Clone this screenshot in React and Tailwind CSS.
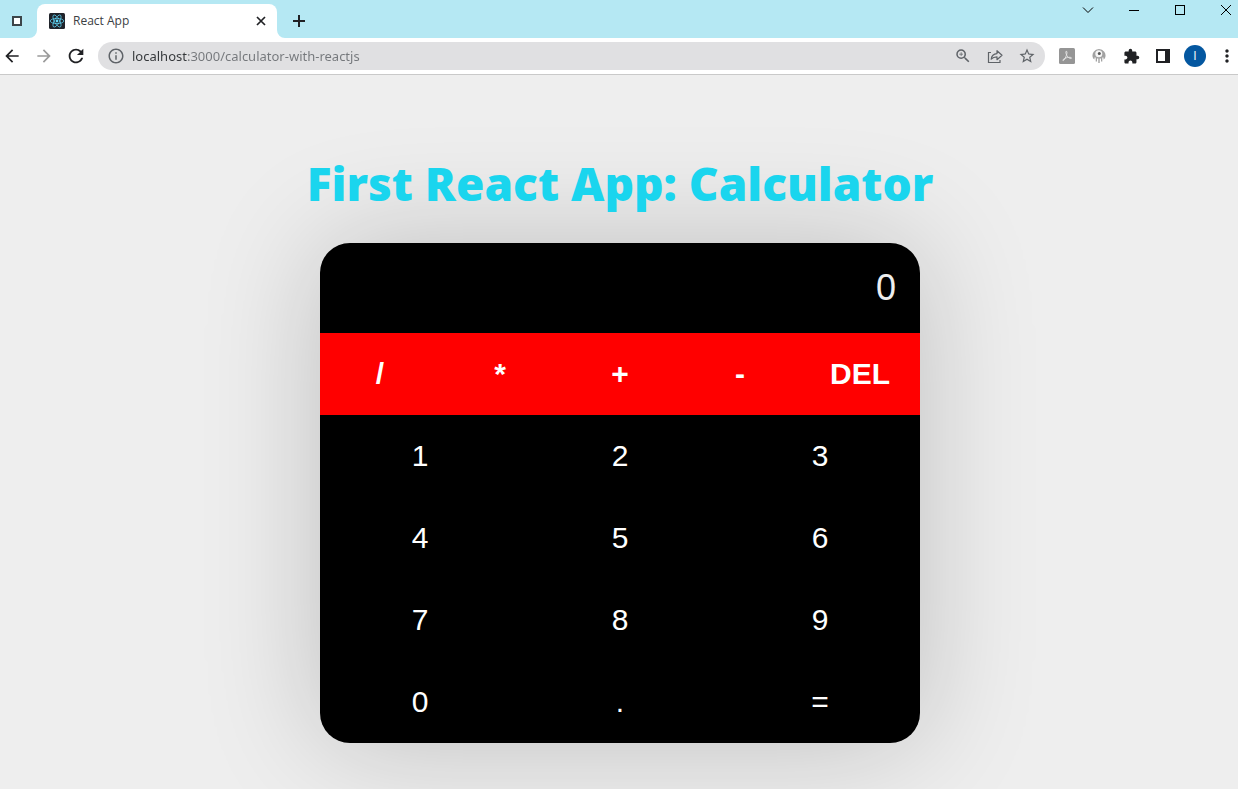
import React, { useState } from "react";
import {
  MdArrowBack,
  MdArrowForward,
  MdExtension,
  MdInfoOutline,
  MdMoreVert,
  MdRefresh,
  MdStarOutline,
  MdZoomIn,
} from "react-icons/md";

function ReactLogo() {
  return (
    <svg viewBox="0 0 16 16" className="size-4 shrink-0" aria-hidden="true">
      <rect width="16" height="16" rx="1.5" fill="#20232a" />
      <g fill="none" stroke="#61dafb" strokeWidth="0.7">
        <ellipse cx="8" cy="8" rx="6.8" ry="2.6" />
        <ellipse cx="8" cy="8" rx="6.8" ry="2.6" transform="rotate(60 8 8)" />
        <ellipse cx="8" cy="8" rx="6.8" ry="2.6" transform="rotate(120 8 8)" />
      </g>
      <circle cx="8" cy="8" r="1.4" fill="#61dafb" />
    </svg>
  );
}

function TabFlare({ className }) {
  return (
    <svg viewBox="0 0 8 8" className={className} aria-hidden="true">
      <path d="M8 0v8H0a8 8 0 0 0 8-8z" fill="#fff" />
    </svg>
  );
}

function IconButton({ label, children, className = "h-6 w-6" }) {
  return (
    <button
      type="button"
      aria-label={label}
      className={`flex shrink-0 items-center justify-center ${className}`}
    >
      {children}
    </button>
  );
}

function TabStrip() {
  return (
    <div className="flex h-[38px] items-end bg-[#b5e8f3] text-black">
      <div className="flex h-[34px] w-[29px] shrink-0 items-center justify-end">
        <IconButton label="Pinned tab">
          <svg viewBox="0 0 10 10" className="size-[10px]">
            <rect x="1" y="1" width="8" height="8" fill="#fff" stroke="#3c4549" strokeWidth="2" />
          </svg>
        </IconButton>
      </div>
      <TabFlare className="size-2 shrink-0" />
      <div className="flex h-[34px] w-60 shrink-0 items-center rounded-t-lg bg-white pr-1 pl-3">
        <ReactLogo />
        <span className="ml-2 flex-1 font-['Open_Sans',sans-serif] text-[12px] leading-4 text-[#3c4043]">
          React App
        </span>
        <IconButton label="Close tab">
          <svg viewBox="0 0 10 10" className="size-[10px]">
            <path d="M1 1l8 8M9 1L1 9" stroke="#202124" strokeWidth="1.7" />
          </svg>
        </IconButton>
      </div>
      <TabFlare className="size-2 shrink-0 -scale-x-100" />
      <div className="ml-[2px] flex h-[34px] items-center">
        <IconButton label="New tab">
          <svg viewBox="0 0 12 12" className="size-3">
            <path d="M6 0v12M0 6h12" stroke="#202124" strokeWidth="2" />
          </svg>
        </IconButton>
      </div>
      <div className="ml-auto flex gap-[22px] self-start">
        <IconButton label="Search tabs" className="h-5 w-6">
          <svg viewBox="0 0 12 12" className="size-3">
            <path d="M1 3.5l5 5 5-5" fill="none" stroke="#000" />
          </svg>
        </IconButton>
        <IconButton label="Minimize" className="h-5 w-6">
          <svg viewBox="0 0 10 10" className="size-[10px]">
            <path d="M0 5.5h10" stroke="#000" />
          </svg>
        </IconButton>
        <IconButton label="Maximize" className="h-5 w-6">
          <svg viewBox="0 0 10 10" className="size-[10px]">
            <rect x="0.5" y="0.5" width="9" height="9" fill="none" stroke="#000" />
          </svg>
        </IconButton>
        <IconButton label="Close window" className="h-5 w-6">
          <svg viewBox="0 0 10 10" className="size-[10px]">
            <path d="M0 0l10 10M10 0L0 10" stroke="#000" />
          </svg>
        </IconButton>
      </div>
    </div>
  );
}

function Toolbar() {
  return (
    <div className="flex h-[37px] items-center gap-2 border-b border-[#c9c9c9] bg-white text-[#202124]">
      <IconButton label="Back">
        <MdArrowBack size={20} />
      </IconButton>
      <IconButton label="Forward" className="h-6 w-6 text-[#9b9b9b]">
        <MdArrowForward size={20} />
      </IconButton>
      <IconButton label="Reload">
        <MdRefresh size={22} />
      </IconButton>
      <div className="mx-[2px] flex h-7 flex-1 items-center gap-2 rounded-full bg-[#e0e0e2] px-[6px] text-[#5f6368]">
        <div className="flex flex-1 items-center gap-1">
          <IconButton label="Site information">
            <MdInfoOutline size={18} />
          </IconButton>
          <input
            aria-label="Address"
            defaultValue="localhost:3000/calculator-with-reactjs"
            className="min-w-0 flex-1 bg-[linear-gradient(to_right,#333639_56px,#74777b_56px)] bg-clip-text font-['Noto_Sans',sans-serif] text-[13px] leading-5 text-transparent caret-[#333639] outline-none"
          />
        </div>
        <IconButton label="Zoom">
          <MdZoomIn size={18} />
        </IconButton>
        <IconButton label="Share">
          <svg viewBox="0 0 16 16" className="size-4" fill="none" stroke="currentColor" strokeWidth="1.2">
            <path d="M4 4.500H1.500v10H13V12" />
            <path
              d="M4.200 11.200c.4-3.600 2.400-5.400 5.800-5.600V2.700l5 4.600-5 4.400V8.800c-2.600 0-4.300.6-5.800 2.400z"
              strokeLinejoin="round"
            />
          </svg>
        </IconButton>
        <IconButton label="Bookmark">
          <MdStarOutline size={18} />
        </IconButton>
      </div>
      <IconButton label="PDF tools">
        <svg viewBox="0 0 16 16" className="size-4">
          <rect width="16" height="16" rx="1.5" fill="#959595" />
          <path
            d="M7.200 3.200c1.300 0 .8 2.300.2 4.100-.6 1.800-2 5-3.300 5.300-1.200-.4 1.500-2.500 4.300-3.100 2-.4 4.100-.3 4.200.6-.3 1-2.600.1-3.900-1.300C7.400 7.500 6.200 3.600 7.200 3.200z"
            fill="none"
            stroke="#e6e6e6"
            strokeWidth="0.9"
          />
        </svg>
      </IconButton>
      <IconButton label="Octopus extension">
        <svg viewBox="0 0 16 16" className="size-4">
          <path
            d="M8 1a6.500 6.500 0 0 0-6.200 8.500c.3 1 .8 1.700 1.700 2.100V9.500h1.200v4h1.300v-3h1.300V15h1.400v-4.500H10v3h1.300v-4h1.200v2.100c.9-.4 1.400-1.100 1.700-2.100A6.500 6.500 0 0 0 8 1z"
            fill="#a2a2a2"
          />
          <circle cx="7.800" cy="5.800" r="3.500" fill="#f5f5f5" />
          <circle cx="8.300" cy="5.500" r="1.500" fill="#555" />
        </svg>
      </IconButton>
      <IconButton label="Extensions">
        <MdExtension size={17} />
      </IconButton>
      <IconButton label="Side panel">
        <svg viewBox="0 0 14 14" className="size-[14px]">
          <path d="M0 0h14v14H0zM2 2v10h7V2z" fill="currentColor" fillRule="evenodd" />
        </svg>
      </IconButton>
      <IconButton label="Profile">
        <span className="flex size-[22px] items-center justify-center rounded-full bg-[#0457a0] font-['Open_Sans',sans-serif] text-[12px] leading-4 text-white">
          I
        </span>
      </IconButton>
      <IconButton label="Menu" className="h-6 w-[23px]">
        <MdMoreVert size={20} />
      </IconButton>
    </div>
  );
}

const OPERATORS = ["/", "*", "+", "-"];
const KEYS = ["1", "2", "3", "4", "5", "6", "7", "8", "9", "0", ".", "="];

function compute(expression) {
  const tokens = expression.match(/\d+\.?\d*|\.\d+|[-+*/]/g) || [];
  const values = [Number(tokens[0] || 0)];
  for (let i = 1; i + 1 < tokens.length; i += 2) {
    const n = Number(tokens[i + 1]);
    if (tokens[i] === "*") values.push(values.pop() * n);
    else if (tokens[i] === "/") values.push(values.pop() / n);
    else values.push(tokens[i] === "-" ? -n : n);
  }
  return String(values.reduce((a, b) => a + b, 0));
}

function Calculator() {
  const [expression, setExpression] = useState("");

  const press = (key) => {
    if (key === "=") {
      setExpression(compute(expression));
      return;
    }
    const last = expression.slice(-1);
    if (OPERATORS.includes(key) && (!last || OPERATORS.includes(last))) return;
    setExpression(expression + key);
  };

  return (
    <section
      aria-label="Calculator"
      className="w-full max-w-[600px] overflow-hidden rounded-[30px] bg-black font-['Liberation_Sans',Arial,sans-serif] text-[30px] leading-9 text-white shadow-[0_0_120px_rgba(0,0,0,0.2)]"
    >
      <output className="flex h-[90px] items-center justify-end px-6 text-4xl text-[#eeeeee]">
        {expression || "0"}
      </output>
      <div className="grid grid-cols-5 bg-[#ff0000] font-bold">
        {OPERATORS.map((op) => (
          <button key={op} type="button" onClick={() => press(op)} className="h-[82px]">
            {op}
          </button>
        ))}
        <button type="button" onClick={() => setExpression(expression.slice(0, -1))} className="h-[82px]">
          DEL
        </button>
      </div>
      <div className="grid grid-cols-3">
        {KEYS.map((key) => (
          <button key={key} type="button" onClick={() => press(key)} className="h-[82px]">
            {key}
          </button>
        ))}
      </div>
    </section>
  );
}

export default function App() {
  return (
    <div className="flex min-h-screen flex-col overflow-hidden bg-[#eeeeee]">
      <header>
        <TabStrip />
        <Toolbar />
      </header>
      <main className="flex flex-1 flex-col items-center pt-[76px] pl-[2px]">
        <h1 className="relative mb-7 text-center font-['Open_Sans',sans-serif] text-[46px] leading-16 font-extrabold text-[#1ad5ee]">
          First React App: Calculator
        </h1>
        <Calculator />
      </main>
    </div>
  );
}
